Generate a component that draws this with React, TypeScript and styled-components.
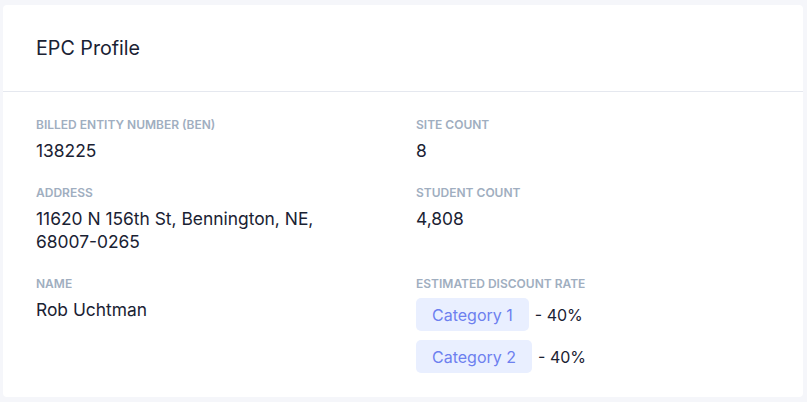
import React from "react";
import styled, { createGlobalStyle } from "styled-components";

const Global = createGlobalStyle`
  html, body { margin: 0; padding: 0; background: #f5f6fa; }
  body { font-family: Inter, "Noto Sans", sans-serif; }
`;

const Page = styled.div`
  padding: 5px 4px 5px 3px;
`;

const Card = styled.section`
  background: #ffffff;
  border-radius: 4px;
  height: 392px;
  box-sizing: border-box;
`;

const Header = styled.header`
  height: 86px;
  padding: 0 33px;
  display: flex;
  align-items: center;
  border-bottom: 1px solid #e5e8ef;
`;

const Title = styled.h2`
  margin: 0;
  font-size: 19.7px;
  font-weight: 400;
  color: #1a2233;
`;

const Body = styled.div`
  padding: 24px 33px 0;
  display: grid;
  grid-template-columns: 1fr 1fr;
  column-gap: 26px;
  row-gap: 22px;
  align-items: start;
`;

const Field = styled.div`
  display: flex;
  flex-direction: column;
`;

const Label = styled.div`
  font-size: 12px;
  font-weight: 600;
  color: #a0aec0;
  text-transform: uppercase;
  line-height: 18px;
  margin-bottom: 5px;
`;

const Value = styled.div`
  font-size: 17.4px;
  color: #1a2233;
  line-height: 23px;
  max-width: 320px;
`;

const RateList = styled.div`
  display: flex;
  flex-direction: column;
  gap: 9px;
`;

const RateRow = styled.div`
  display: flex;
  align-items: center;
  gap: 6px;
  font-size: 16px;
  color: #1a2233;
`;

const Badge = styled.span`
  display: inline-flex;
  align-items: center;
  height: 33px;
  padding: 0 16px;
  border-radius: 5px;
  background: #e9efff;
  color: #6d80ef;
  font-size: 16px;
`;

export default function App() {
  return (
    <>
      <Global />
      <Page>
        <Card>
          <Header>
            <Title>EPC Profile</Title>
          </Header>
          <Body>
            <Field>
              <Label>Billed Entity Number (BEN)</Label>
              <Value>138225</Value>
            </Field>
            <Field>
              <Label>Site Count</Label>
              <Value>8</Value>
            </Field>
            <Field>
              <Label>Address</Label>
              <Value>11620 N 156th St, Bennington, NE, 68007-0265</Value>
            </Field>
            <Field>
              <Label>Student Count</Label>
              <Value>4,808</Value>
            </Field>
            <Field>
              <Label>Name</Label>
              <Value>Rob Uchtman</Value>
            </Field>
            <Field>
              <Label>Estimated Discount Rate</Label>
              <RateList>
                <RateRow>
                  <Badge>Category 1</Badge>- 40%
                </RateRow>
                <RateRow>
                  <Badge>Category 2</Badge>- 40%
                </RateRow>
              </RateList>
            </Field>
          </Body>
        </Card>
      </Page>
    </>
  );
}
